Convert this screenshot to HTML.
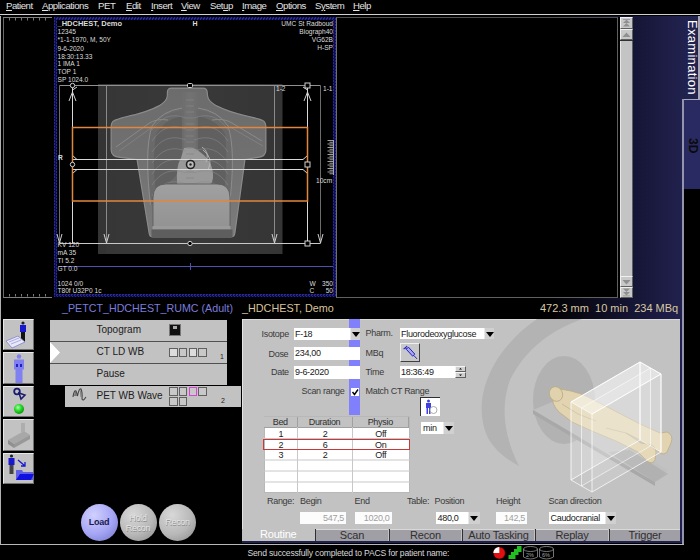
<!DOCTYPE html>
<html><head><meta charset="utf-8">
<style>
*{margin:0;padding:0;box-sizing:border-box}
html,body{width:700px;height:560px;overflow:hidden;background:#000;font-family:"Liberation Sans",sans-serif;position:relative}
.a{position:absolute}
.menu{color:#e4e4e4;font-size:9.6px;letter-spacing:-.45px;top:0.3px;white-space:nowrap}
.menu u{text-decoration:underline}
.ov{color:#dcdcdc;font-size:6.6px;line-height:7.8px;white-space:nowrap}
.ib{width:31px;background:#c2c2c2;border:1px solid;border-color:#e8e8e8 #707070 #707070 #e8e8e8}
.pr{background:#c2c2c2}
.sbb{left:620px;width:13px;height:11.5px;background:#c8c8c8;border:1px solid;border-color:#f0f0f0 #606060 #606060 #f0f0f0}
.pt{font-size:10px;color:#202020;white-space:nowrap}
.bx{width:8.5px;height:8.5px;border:1px solid #606060;background:#c8c8c8}
.rb{width:37px;height:37px;border-radius:50%}
.lb{font-size:9px;letter-spacing:-.3px;color:#3a3a3a;white-space:nowrap}
.in{background:#fff;font-size:9px;letter-spacing:-.3px;color:#202020;white-space:nowrap;padding-left:1px;line-height:12px;overflow:hidden}
.gr{color:#a0a0a0;text-align:right;padding-right:2px;background:#fcfcfc}
.dd{width:10px;background:#d0d0d0;border-left:1px solid #e8e8e8}
.dd:after{content:"";position:absolute;left:50%;top:50%;margin:-2px 0 0 -4px;border-left:4px solid transparent;border-right:4px solid transparent;border-top:5px solid #000}
.th{height:11px;font-size:9px;letter-spacing:-.3px;color:#303030;text-align:center;line-height:11px;background:#c2c2c2;border-right:1px solid #a0a0a0;border-bottom:1px solid #a0a0a0}
.td{font-size:9px;letter-spacing:-.3px;color:#202020;text-align:center;line-height:10.5px}
.tab{height:12.5px;background:#a09fa5;color:#303030;font-size:11px;text-align:center;line-height:11.5px;border-top:1px solid #d8d8d8;letter-spacing:-.2px}
</style></head><body>
<!-- menu bar -->
<div class="a menu" style="left:6px"><u>P</u>atient</div>
<div class="a menu" style="left:42px"><u>A</u>pplications</div>
<div class="a menu" style="left:98px">PET</div>
<div class="a menu" style="left:126px"><u>E</u>dit</div>
<div class="a menu" style="left:151px"><u>I</u>nsert</div>
<div class="a menu" style="left:181px"><u>V</u>iew</div>
<div class="a menu" style="left:210px">Set<u>u</u>p</div>
<div class="a menu" style="left:242px"><u>I</u>mage</div>
<div class="a menu" style="left:276px"><u>O</u>ptions</div>
<div class="a menu" style="left:315px">S<u>y</u>stem</div>
<div class="a menu" style="left:353px"><u>H</u>elp</div>
<div class="a" style="left:0;top:14px;width:700px;height:1px;background:#d0d0d0"></div>

<!-- left border line -->
<div class="a" style="left:0;top:16px;width:1px;height:529px;background:#b0b0b0"></div>

<!-- left black panel ruler -->
<div class="a" style="left:3px;top:17px;width:49px;height:281px;border-left:1px solid #6a6a6a;border-top:1px solid #808080;border-bottom:1px solid #808080"></div>
<svg class="a" style="left:0;top:15px" width="54" height="285"><g stroke="#787878" stroke-width="1"><path d="M9.5 3 V5.5 M15.5 3 V5.5 M21.5 3 V5.5 M27.5 3 V5.5 M33.5 3 V5.5 M39.5 3 V5.5 M45.5 3 V5.5"/><path d="M9.5 279 V281.5 M15.5 279 V281.5 M21.5 279 V281.5 M27.5 279 V281.5 M33.5 279 V281.5 M39.5 279 V281.5 M45.5 279 V281.5"/></g></svg>

<!-- image viewer -->
<div class="a" style="left:54px;top:17px;width:282px;height:280px;background:repeating-conic-gradient(#0c0c52 0 25%,#2a2a8c 0 50%) 0 0/3px 3px"></div>
<div class="a" style="left:57px;top:20px;width:276px;height:274px;background:#000"></div>

<svg class="a" style="left:0;top:0" width="700" height="560" viewBox="0 0 700 560">
<defs>
<linearGradient id="torso" x1="0" y1="0" x2="0" y2="1">
<stop offset="0" stop-color="#6c6c6c"/><stop offset=".45" stop-color="#707070"/><stop offset="1" stop-color="#7c7c7c"/>
</linearGradient>
<linearGradient id="xbg" x1="0" y1="0" x2="1" y2="0">
<stop offset="0" stop-color="#363636"/><stop offset=".5" stop-color="#393939"/><stop offset="1" stop-color="#353535"/>
</linearGradient>
<linearGradient id="abd" x1="0" y1="0" x2="0" y2="1">
<stop offset="0" stop-color="#a0a0a0"/><stop offset="1" stop-color="#939393"/>
</linearGradient>
<linearGradient id="spine" x1="0" y1="0" x2="1" y2="0"><stop offset="0" stop-color="#747474" stop-opacity="0"/><stop offset=".5" stop-color="#747474" stop-opacity=".8"/><stop offset="1" stop-color="#747474" stop-opacity="0"/></linearGradient>
<radialGradient id="lung" cx=".5" cy=".5" r=".5">
<stop offset="0" stop-color="#6c6c6c"/><stop offset="1" stop-color="#7a7a7a"/>
</radialGradient>
</defs>
<!-- xray background -->
<rect x="98" y="84" width="184.5" height="170" fill="url(#xbg)"/>
<rect x="98" y="84" width="8" height="170" fill="#343434"/>


<!-- torso -->
<path d="M171.5 87.5 L203 87.5 Q207.5 87.5 207.8 92 L208.2 96 C209 103 220 107 231 111 C244 115.5 259 117 264.5 121 Q266.5 123 266.5 128 L266.5 150 Q266.5 157 258 158 L245.5 160 L235.5 233 Q235 237.5 230.5 237.5 L153 237.5 Q149 237.5 148.5 233 L136.5 160 L120 158 Q110.5 157 110.5 150 L110.5 128 Q110.5 123 112.5 121 C118 117 132 115.5 145 111 C156 107 166 103 166.7 96 L166.8 92 Q167 87.5 171.5 87.5 Z" fill="url(#torso)" stroke="#2e2e2e" stroke-width=".9"/>
<clipPath id="tclip"><path d="M171.5 87.5 L203 87.5 Q207.5 87.5 207.8 92 L208.2 96 C209 103 220 107 231 111 C244 115.5 259 117 264.5 121 Q266.5 123 266.5 128 L266.5 150 Q266.5 157 258 158 L245.5 160 L235.5 233 Q235 237.5 230.5 237.5 L153 237.5 Q149 237.5 148.5 233 L136.5 160 L120 158 Q110.5 157 110.5 150 L110.5 128 Q110.5 123 112.5 121 C118 117 132 115.5 145 111 C156 107 166 103 166.7 96 L166.8 92 Q167 87.5 171.5 87.5 Z"/></clipPath>
<path d="M171.5 87.5 L203 87.5 Q207.5 87.5 207.8 92 L208.2 96 C209 103 220 107 231 111 C244 115.5 259 117 264.5 121 Q266.5 123 266.5 128 L266.5 150 Q266.5 157 258 158 L245.5 160 L235.5 233 Q235 237.5 230.5 237.5 L153 237.5 Q149 237.5 148.5 233 L136.5 160 L120 158 Q110.5 157 110.5 150 L110.5 128 Q110.5 123 112.5 121 C118 117 132 115.5 145 111 C156 107 166 103 166.7 96 L166.8 92 Q167 87.5 171.5 87.5 Z" fill="none" stroke="#8a8a8a" stroke-width="2.4" clip-path="url(#tclip)"/>
<!-- lungs -->
<path d="M151 205 Q146 160 151 130 Q160 114 184 110 L184 178 L160 200 Z" fill="#6a6a6a"/>
<path d="M229 205 Q235 160 230 130 Q221 114 196 110 L196 178 L220 200 Z" fill="#6a6a6a"/>
<path d="M156 195 Q152 160 156 134 Q164 120 182 116 L182 170 Z" fill="#555" opacity=".5"/>
<path d="M224 195 Q228 160 225 134 Q217 120 198 116 L198 170 Z" fill="#555" opacity=".5"/>
<!-- spine / mediastinum -->
<rect x="181" y="92" width="18" height="140" fill="url(#spine)"/>
<path d="M177 182 Q176 166 181 158 L184 148 Q194 146 200 152 Q214 162 213 178 Q212 188 202 188 L183 188 Q177 188 177 182 Z" fill="#999999"/>
<path d="M202 147 Q210 152 206 162 M203 150 Q214 158 208 170" stroke="#c0c0c0" stroke-width=".8" fill="none"/>
<path d="M186 118 Q165 110 152 130 M194 118 Q215 110 228 130 M186 129 Q165 121 152 141 M194 129 Q215 121 228 141 M186 140 Q165 132 152 152 M194 140 Q215 132 228 152 M186 151 Q165 143 152 163 M194 151 Q215 143 228 163 M186 162 Q165 154 152 174 M194 162 Q215 154 228 174 M186 173 Q165 165 152 185 M194 173 Q215 165 228 185 M186 184 Q165 176 152 196 M194 184 Q215 176 228 196" fill="none" stroke="#8a8a8a" stroke-width="1" opacity=".55"/>
<path d="M186 100 H194 M186 106 H194 M186 112 H194 M186 118 H194 M186 124 H194 M186 130 H194 M186 136 H194 M186 142 H194 M186 148 H194 M186 154 H194 M186 160 H194 M186 166 H194 M186 172 H194 M186 178 H194 M186 184 H194 M186 190 H194 M186 196 H194 M186 202 H194 M186 208 H194 M186 214 H194 M186 220 H194 M186 226 H194" stroke="#858585" stroke-width="1.5" opacity=".5"/>
<!-- ribcage outline -->
<path d="M150.5 205 Q144 150 152 126 Q162 111 182 108" fill="none" stroke="#8c8c8c" stroke-width="1"/>
<path d="M229.5 205 Q236 150 228 126 Q218 111 198 108" fill="none" stroke="#8c8c8c" stroke-width="1"/>
<!-- clavicles / arms -->
<path d="M116 147 L148 124 Q156 118 168 120 M262 141 L232 123 Q224 118 212 120" stroke="#8a8a8a" stroke-width="1" fill="none"/>
<path d="M119 151 L151 128 M263 146 L230 127" stroke="#808080" stroke-width="1" fill="none"/>
<!-- abdomen block -->
<path d="M153 227 L153 198 Q153 184 166 184 L217 184 Q230 184 230 198 L230 227 Z" fill="url(#abd)" stroke="#585858" stroke-width=".8"/>
<rect x="152.5" y="226" width="78" height="3.5" fill="#9a9a9a"/>
<rect x="151.5" y="229.5" width="81" height="7.5" fill="#5e5e5e"/>
<!-- overlay frame lines -->
<g fill="none" stroke-width="1">
<path d="M59.5 85.5 L320.5 85.5" stroke="#909090"/><path d="M59.5 243.5 L59.5 85.5 M320.5 85.5 L320.5 243.5" stroke="#6c6c6c"/>
<path d="M106.5 85.5 V243.5 M274.5 85.5 V243.5" stroke="#8a8a8a"/>
<path d="M59.5 243.5 H320.5" stroke="#c8c8c8"/>
<path d="M72.5 85.5 V243.5 M307.5 85.5 V243.5" stroke="#d8d8d8"/>
<path d="M73 159.5 H303 M73 169.5 H303 M303 159.5 L307.5 155.5 M303 169.5 L307.5 173.5 M77 159.5 L72.5 155.5 M77 169.5 L72.5 173.5" stroke="#d8d8d8"/>
</g>
<g fill="none" stroke="#e0883c" stroke-width="1.5">
<path d="M72.5 127.5 H307.5 V201 H72.5 Z"/>
</g>
<!-- markers -->
<g fill="#000" stroke="#d0d0d0" stroke-width="1">
<circle cx="72.5" cy="85.5" r="2.2"/>
<circle cx="72.5" cy="164.5" r="2.2"/>
<rect x="305" y="83" width="5" height="5"/>
<rect x="305" y="162" width="5" height="5"/>
<rect x="305" y="241" width="5" height="5"/>
<rect x="187.5" y="83.5" width="5" height="4" rx="1"/>
<circle cx="190" cy="243.5" r="2.2"/>
<circle cx="190.5" cy="164.5" r="4" stroke="#222" stroke-width="1.6" fill="#bbb"/>
<circle cx="190.5" cy="164.5" r="1.2" fill="#222" stroke="none"/>
</g>
<g fill="none" stroke="#d0d0d0" stroke-width="1">
<path d="M72.5 92 L69 101 M72.5 92 L76 101 M72.5 90 L77 87"/>
<path d="M307.5 92 L304 101 M307.5 92 L311 101 M307.5 90 L303 87"/>
<path d="M57 234 L59.5 243 L62 234 M104 234 L106.5 243 L109 234 M272 234 L274.5 243 L277 234 M318 234 L320.5 243 L323 234"/>
</g>
<!-- scale ruler -->
<g stroke="#c8c8c8" stroke-width=".8"><path d="M333.5 140 V175"/><path d="M327.5 140.50 H333 M329.5 142.25 H333 M327.5 144.00 H333 M329.5 145.75 H333 M327.5 147.50 H333 M329.5 149.25 H333 M327.5 151.00 H333 M329.5 152.75 H333 M327.5 154.50 H333 M329.5 156.25 H333 M327.5 158.00 H333 M329.5 159.75 H333 M327.5 161.50 H333 M329.5 163.25 H333 M327.5 165.00 H333 M329.5 166.75 H333 M327.5 168.50 H333 M329.5 170.25 H333 M327.5 172.00 H333 M329.5 173.75 H333"/></g>
<!-- blue line -->
<path d="M58 266.5 H333" stroke="#5050b0" stroke-width="1.2"/>
<path d="M190.5 263 V270" stroke="#5050b0" stroke-width="1"/>
</svg>
<!-- viewer text overlays -->
<div class="a ov" style="left:57.5px;top:20.2px;font-weight:bold;font-size:7.5px">_HDCHEST, Demo</div>
<div class="a ov" style="left:57.5px;top:28.2px">12345</div>
<div class="a ov" style="left:57.5px;top:36.2px">*1-1-1970, M, 50Y</div>
<div class="a ov" style="left:57.5px;top:44.7px">9-6-2020</div>
<div class="a ov" style="left:57.5px;top:52.5px">18:30:13.33</div>
<div class="a ov" style="left:57.5px;top:60.2px">1 IMA 1</div>
<div class="a ov" style="left:57.5px;top:68.0px">TOP 1</div>
<div class="a ov" style="left:57.5px;top:75.7px">SP 1024.0</div>
<div class="a ov" style="left:192.5px;top:20.2px;font-weight:bold;font-size:7px">H</div>
<div class="a ov" style="right:367px;top:20.2px;text-align:right">UMC St Radboud<br>Biograph40<br>VG62B<br>H-SP</div>
<div class="a ov" style="left:58px;top:153.5px;font-weight:bold">R</div>
<div class="a ov" style="left:316px;top:176.5px">10cm</div>
<div class="a ov" style="left:276px;top:84.5px">1-2</div>
<div class="a ov" style="left:323px;top:84.5px">1-1</div>
<div class="a ov" style="left:57.5px;top:241.3px;line-height:7.85px">KV 120<br>mA 35<br>TI 5.2<br>GT 0.0</div>
<div class="a ov" style="left:57.5px;top:279.7px;line-height:7.4px">1024 0/0<br>T80f U32P0 1c</div>
<div class="a ov" style="left:309.5px;top:281px;line-height:6.8px">W<br>C</div>
<div class="a ov" style="right:367px;top:281px;line-height:6.8px;text-align:right">350<br>50</div>
<div class="a" style="left:1px;top:1px"></div>
<div class="a" style="left:340px;top:16px;width:358px;height:303px;background:linear-gradient(90deg,#000 0px,#000 205px,#151535 293px,#21214e 342px,#232350 358px)"></div>
<div class="a" style="left:336px;top:17px;width:284px;height:281px;background:#000"></div>
<!-- right black panel -->
<div class="a" style="left:336px;top:17px;width:282px;height:281px;border-top:1px solid #505050;border-left:1px solid #707070;border-right:1px solid #606060;border-bottom:1px solid #606060"></div>

<!-- scrollbar -->
<div class="a" style="left:620px;top:17px;width:13px;height:281px;background:#c4c4c4;border-left:1px solid #e8e8e8;border-right:1px solid #606060"></div>
<div class="a sbb" style="top:17px"></div><div class="a sbb" style="top:28.5px"></div>
<div class="a sbb" style="top:275.5px"></div><div class="a sbb" style="top:286.5px"></div>
<div class="a" style="left:620px;top:40px;width:13px;height:1px;background:#303030"></div>
<svg class="a" style="left:620px;top:17px" width="13" height="281">
<g fill="#909090"><path d="M3 6 L6.5 2.5 L10 6 Z M3 9.5 L6.5 6 L10 9.5 Z"/><rect x="3" y="2" width="7" height=".8"/>
<path d="M2.5 20 L6.5 15.5 L10.5 20 Z"/>
<path d="M2.5 263 L6.5 267.5 L10.5 263 Z"/>
<path d="M3 271.5 L6.5 275 L10 271.5 Z M3 275 L6.5 278.5 L10 275 Z"/><rect x="3" y="278.5" width="7" height=".8"/></g>
</svg>


<!-- navy panel -->
<div class="a" style="left:698px;top:16px;width:1.5px;height:84px;background:#a8a8b8"></div>
<div class="a" style="left:682px;top:99px;width:18px;height:1.5px;background:#a8a8b8"></div>
<div class="a" style="left:683px;top:100px;width:17px;height:89px;background:#2a2a62"></div>
<div class="a" style="left:684px;top:189px;width:16px;height:371px;background:#000"></div>
<div class="a" style="left:682px;top:99px;width:2px;height:446px;background:#9494ac"></div>
<div class="a" style="left:685px;top:17px;width:14px;height:82px;">
<div style="position:absolute;left:14px;top:3px;transform-origin:0 0;transform:rotate(90deg);font-size:13px;color:#fff;white-space:nowrap;letter-spacing:.3px;line-height:14px">Examination</div></div>
<div class="a" style="left:685px;top:100px;width:15px;height:89px;">
<div style="position:absolute;left:14px;top:37.5px;transform-origin:0 0;transform:rotate(90deg);font-size:12px;font-weight:bold;color:#0a0a0a;white-space:nowrap;line-height:13px">3D</div></div>

<!-- status row -->
<div class="a" style="left:62px;top:302.3px;font-size:10.7px;color:#7c7cdc;white-space:nowrap">_PETCT_HDCHEST_RUMC (Adult)</div>
<div class="a" style="left:242px;top:302.3px;font-size:10.8px;color:#d8c49c;white-space:nowrap">_HDCHEST, Demo</div>
<div class="a" style="left:540px;top:302px;font-size:11px;color:#d8c8a0;white-space:nowrap">472.3 mm&nbsp;&nbsp;10 min&nbsp;&nbsp;234 MBq</div>

<!-- main grey panel -->
<div class="a" style="left:242px;top:319px;width:438px;height:222px;background:#c2c2c2;border-left:1px solid #e4e4e4;border-top:1px solid #d8d8d8"></div>
<div class="a" style="left:242px;top:541px;width:440px;height:2px;background:#202050"></div>
<div class="a" style="left:680px;top:319px;width:2px;height:224px;background:#202050"></div>

<!-- ===== LOWER SECTION ===== -->
<!-- left icons -->
<div class="a ib" style="left:3px;top:319px;height:31px"></div>
<div class="a ib" style="left:3px;top:352px;height:32px"></div>
<div class="a ib" style="left:3px;top:386px;height:31px"></div>
<div class="a ib" style="left:3px;top:419px;height:32px"></div>
<div class="a ib" style="left:3px;top:453px;height:31px"></div>
<svg class="a" style="left:0;top:315px" width="40" height="175" viewBox="0 315 40 175">
<!-- icon1 person + table -->
<circle cx="23" cy="323" r="1.6" fill="#222"/>
<rect x="20" y="325" width="6" height="7" fill="#1818d0"/>
<rect x="21" y="332" width="4" height="10" fill="#111"/>
<path d="M6 341 L18 336 L25 342 L12 348 Z" fill="#e8e8f8" stroke="#8080d0" stroke-width=".8"/>
<path d="M9 342 L19 338 M11 344 L21 340" stroke="#8080d0" stroke-width=".6"/>
<!-- icon2 light person -->
<circle cx="19" cy="356.5" r="2.2" fill="#8080f0"/>
<rect x="14" y="359.5" width="10" height="10" fill="#8080f0"/>
<rect x="15.5" y="369" width="7" height="14" fill="#8080f0"/>
<rect x="16" y="364" width="2" height="3" fill="#2020c0"/><rect x="20" y="364" width="2" height="3" fill="#2020c0"/>
<!-- icon3 key + green ball -->
<circle cx="17" cy="391.5" r="2.8" fill="none" stroke="#1a1a70" stroke-width="1.8"/>
<path d="M19 393 L25 395 L21 399 Z" fill="none" stroke="#1a1a70" stroke-width="1.5"/>
<defs><radialGradient id="gb" cx=".4" cy=".35" r=".6"><stop offset="0" stop-color="#b0ffb0"/><stop offset=".5" stop-color="#30e030"/><stop offset="1" stop-color="#10a010"/></radialGradient>
<radialGradient id="loadg" cx=".35" cy=".3" r=".75"><stop offset="0" stop-color="#c8c8ff"/><stop offset=".6" stop-color="#a0a0f4"/><stop offset="1" stop-color="#7c7cd8"/></radialGradient>
<radialGradient id="greyg" cx=".35" cy=".3" r=".75"><stop offset="0" stop-color="#d0d0d0"/><stop offset=".6" stop-color="#b4b4b4"/><stop offset="1" stop-color="#8c8c8c"/></radialGradient>
</defs>
<circle cx="19" cy="409" r="5" fill="url(#gb)"/>
<!-- icon4 table grey -->
<path d="M8 440 L24 431 L30 435 L14 444 Z" fill="#a8a8a8"/>
<path d="M8 440 L14 444 L14 448 L8 444 Z" fill="#909090"/>
<path d="M14 444 L30 435 L30 439 L14 448 Z" fill="#989898"/>
<path d="M22 423 L22 432 M24 423 L24 431" stroke="#a0a0a0" stroke-width="1.2"/>
<!-- icon5 person arrow folder -->
<circle cx="11.5" cy="456" r="1.6" fill="#222"/>
<rect x="8.5" y="458" width="6" height="7" fill="#1818d0"/>
<rect x="9.5" y="465" width="4" height="9" fill="#444"/>
<path d="M18 460 L25 466 M25 462 L25 466 L21 466" stroke="#1818d0" stroke-width="1.3" fill="none"/>
<path d="M16 470 L22 470 L23 472 L33 472 L33 480 L16 480 Z" fill="#6060e0"/>
<path d="M16 480 L20 474 L34 474 L31 480 Z" fill="#1010e0"/>
</svg>

<!-- protocol list -->
<div class="a pr" style="left:50px;top:320px;width:177px;height:21px"></div>
<div class="a pr" style="left:50px;top:342px;width:177px;height:21px"></div>
<div class="a pr" style="left:50px;top:364px;width:177px;height:21px"></div>
<div class="a pr" style="left:65px;top:386px;width:176px;height:21px"></div>
<div class="a" style="left:50px;top:341px;width:177px;height:1px;background:#505050"></div>
<div class="a" style="left:50px;top:363px;width:177px;height:1px;background:#505050"></div>
<svg class="a" style="left:50px;top:342px" width="11" height="21"><path d="M0 0 L10 10.5 L0 21 Z" fill="#fff"/></svg>
<div class="a pt" style="left:96.5px;top:324px">Topogram</div>
<div class="a pt" style="left:96.5px;top:346px">CT LD WB</div>
<div class="a pt" style="left:96.5px;top:368px">Pause</div>
<div class="a pt" style="left:96.5px;top:389.5px">PET WB Wave</div>
<svg class="a" style="left:72px;top:387px" width="16" height="14"><path d="M1 10 Q2 3 4 4 Q5 7 5.5 9 Q7 1 9 2 Q10.5 5 10 12 Q11 14 12.5 12 L14 10" fill="none" stroke="#444" stroke-width="1.1"/><path d="M2 9 Q3 4 4 5 L5 9 Z M8 3 Q9.5 4 9.5 10 L8.5 10 Z" fill="#777"/></svg>
<div class="a" style="left:169px;top:324px;width:12px;height:12px;background:#111;border:1px solid #777"></div>
<div class="a" style="left:173px;top:326px;width:4px;height:3px;background:#aaa"></div>
<div class="a bx" style="left:169px;top:348px;background:#dcdcdc"></div><div class="a bx" style="left:178.5px;top:348px"></div><div class="a bx" style="left:188.5px;top:348px;background:#dcdcdc"></div><div class="a bx" style="left:198px;top:348px"></div>
<div class="a" style="left:220px;top:353px;font-size:7px;color:#222">1</div>
<div class="a bx" style="left:169px;top:387px"></div><div class="a bx" style="left:178.5px;top:387px"></div><div class="a bx" style="left:188.5px;top:387px;border-color:#e040e0;border-width:1.5px"></div><div class="a bx" style="left:198px;top:387px"></div>
<div class="a bx" style="left:169px;top:397px"></div><div class="a bx" style="left:178.5px;top:397px"></div>
<div class="a" style="left:221px;top:397px;font-size:7px;color:#222">2</div>

<!-- buttons -->
<div class="a rb" style="left:80.5px;top:504px;background:radial-gradient(circle at 35% 30%,#d0d0ff 0%,#a4a4f4 55%,#7070c8 100%)"></div>
<div class="a rb" style="left:119.5px;top:504px;background:radial-gradient(circle at 35% 30%,#d8d8d8 0%,#b8b8b8 55%,#888 100%)"></div>
<div class="a rb" style="left:159px;top:504px;background:radial-gradient(circle at 35% 30%,#d8d8d8 0%,#b8b8b8 55%,#888 100%)"></div>
<div class="a" style="left:80.5px;top:517px;width:37px;text-align:center;font-size:9px;font-weight:bold;color:#1a1a50;letter-spacing:-.3px">Load</div>
<div class="a" style="left:119.5px;top:514px;width:37px;text-align:center;font-size:9px;line-height:9.5px;color:#e4e4e4;letter-spacing:-.3px;text-shadow:.5px .5px 0 #8a8a8a">Hold<br>Recon</div>
<div class="a" style="left:159px;top:517px;width:37px;text-align:center;font-size:9px;color:#e4e4e4;letter-spacing:-.3px;text-shadow:.5px .5px 0 #8a8a8a">Recon</div>

<!-- grey panel content -->
<svg class="a" style="left:242px;top:319px" width="438" height="210" viewBox="242 319 438 210">
<defs><clipPath id="pc"><rect x="242" y="319" width="438" height="210"/></clipPath></defs>
<g clip-path="url(#pc)">
<path d="M537 319 C498 345 468 395 488 438 C496 452 508 460 519 466 C506 440 499 410 510 380 C526 348 552 330 582 319 Z" fill="#b3b3b3"/>
<ellipse cx="564" cy="400" rx="31" ry="44" fill="#b2b2b2"/>
<!-- table -->
<path d="M533 410 L552 402 L668 470 L655 482 Z" fill="#bfbfbf"/>
<path d="M533 410 L655 482 L655 486 L533 414 Z" fill="#a8a8a8"/>
<path d="M608 452 L655 482 L668 474 L630 450 Z" fill="#a8a8a8" opacity=".6"/>
<!-- patient -->
<path d="M560 389 L571 391 Q580 393 588 397 L613 410 L640 424 L660 433 L667 432 Q674 435 671 443 L667 452 Q663 456 659 452 L652 447 L638 439 L626 433 L641 443 L648 444 Q656 446 656 452 L655 460 Q652 465 647 461 L638 452 L616 441 L592 431 L572 422 L559 412 Q551 404 553 396 Z" fill="#e2d4b0" stroke="#bcac84" stroke-width=".8"/>
<path d="M562 404 L578 414 L596 421 M606 428 L626 433" fill="none" stroke="#c4b48c" stroke-width=".8"/>
<ellipse cx="556" cy="394" rx="6.5" ry="7.5" fill="#e0d2ac" stroke="#bcac84" stroke-width=".8" transform="rotate(-25 556 394)"/>
<!-- glass slabs -->
<path d="M571 402 L640 362 L640 440 L571 480 Z" fill="rgba(255,255,255,.2)" stroke="rgba(255,255,255,.8)" stroke-width="1"/>
<path d="M640 362 L661 374 L661 452 L640 440 Z" fill="rgba(255,255,255,.22)" stroke="rgba(255,255,255,.7)" stroke-width="1"/>
<path d="M571 402 L640 362 L661 374 L592 414 Z" fill="rgba(255,255,255,.4)" stroke="rgba(255,255,255,.7)" stroke-width="1"/>
<path d="M581.5 408 L650.5 368 L650.5 446 L581.5 486 Z" fill="rgba(255,255,255,.1)" stroke="rgba(255,255,255,.6)" stroke-width="1"/>
<path d="M592 414 L661 374 L661 452 L592 492 Z" fill="rgba(255,255,255,.12)" stroke="rgba(255,255,255,.75)" stroke-width="1"/>
<path d="M571 480 L592 492" stroke="rgba(255,255,255,.7)" stroke-width="1"/>
</g>
</svg>
<!-- blue band -->
<div class="a" style="left:349px;top:319px;width:11px;height:96px;background:#8080fc"></div>

<div class="a lb" style="left:261.5px;top:328.5px">Isotope</div>
<div class="a lb" style="left:268.5px;top:348.5px">Dose</div>
<div class="a lb" style="left:271px;top:366.5px">Date</div>
<div class="a lb" style="left:301.5px;top:385.5px">Scan range</div>
<div class="a in" style="left:294px;top:328px;width:56px;height:12px">F-18</div>
<div class="a dd" style="left:350px;top:328px;height:11.5px"></div>
<div class="a in" style="left:294px;top:346.5px;width:66px;height:13px">234,00</div>
<div class="a in" style="left:294px;top:365.5px;width:66px;height:13px">9-6-2020</div>
<div class="a" style="left:351px;top:388px;width:8px;height:8px;background:#fff"></div>
<svg class="a" style="left:351px;top:388px" width="8" height="8"><path d="M1.5 4 L3.5 6.5 L7 1.5" fill="none" stroke="#000" stroke-width="1.4"/></svg>

<div class="a lb" style="left:365.5px;top:328px">Pharm.</div>
<div class="a lb" style="left:365.5px;top:347.5px">MBq</div>
<div class="a lb" style="left:365.5px;top:366.5px">Time</div>
<div class="a lb" style="left:365.5px;top:386px">Match CT Range</div>
<div class="a in" style="left:400px;top:328.3px;width:85px;height:11px">Fluorodeoxyglucose</div>
<div class="a dd" style="left:484px;top:328.3px;height:11px"></div>
<div class="a" style="left:400px;top:343px;width:20px;height:19px;background:#c8c8c8;border:1px solid;border-color:#f0f0f0 #404040 #404040 #f0f0f0"></div>
<svg class="a" style="left:400px;top:343px" width="20" height="19"><path d="M3.6 6.2 L7.2 3.2 M5.4 4.7 L6.6 6" stroke="#2020d0" stroke-width="1.1" fill="none"/><path d="M6.3 6.3 L8.4 4.1 L14.8 11.1 L12.7 13.2 Z" stroke="#2020d0" stroke-width="1" fill="#a8a8e8"/><path d="M13.8 12.4 L17 15.9" stroke="#2020d0" stroke-width="1" fill="none"/></svg>
<div class="a in" style="left:400px;top:365.7px;width:55px;height:12px">18:36:49</div>
<div class="a" style="left:455px;top:365.5px;width:11px;height:6px;background:#d0d0d0;border:1px solid;border-color:#f4f4f4 #606060 #606060 #f4f4f4"></div>
<div class="a" style="left:455px;top:371.5px;width:11px;height:6px;background:#d0d0d0;border:1px solid;border-color:#f4f4f4 #606060 #606060 #f4f4f4"></div>
<svg class="a" style="left:455px;top:365.5px" width="11" height="12"><path d="M4 3.5 L5.5 2 L7 3.5 Z M4 8.5 L5.5 10 L7 8.5 Z" fill="#000"/></svg>
<div class="a" style="left:420px;top:397px;width:19.5px;height:19px;background:#fff;border-left:1px solid #303030;border-top:1px solid #303030"></div>
<svg class="a" style="left:420px;top:397px" width="20" height="19"><circle cx="8.5" cy="4" r="1.5" fill="#4040e0"/><rect x="6" y="6" width="5" height="5" fill="#4040e0"/><rect x="6.5" y="11" width="1.5" height="6" fill="#4040e0"/><rect x="9" y="11" width="1.5" height="6" fill="#4040e0"/><circle cx="13.5" cy="13" r="3.5" fill="#fff" stroke="#999" stroke-width=".8"/></svg>
<div class="a in" style="left:421px;top:421.7px;width:33px;height:12px;padding-left:2px">min</div>
<div class="a dd" style="left:443px;top:421.7px;height:12px;width:11px"></div>

<!-- table -->
<div class="a" style="left:263.5px;top:416px;width:146px;height:77px;background:#fff;border:1px solid #b8b8b8"></div>
<div class="a th" style="left:264px;top:416.5px;width:33.5px">Bed</div>
<div class="a th" style="left:297.5px;top:416.5px;width:55px">Duration</div>
<div class="a th" style="left:352.5px;top:416.5px;width:56.5px">Physio</div>
<svg class="a" style="left:263px;top:416px" width="148" height="78">
<g stroke="#c8c8c8" stroke-width="1">
<path d="M0 22.5 H147 M0 33.5 H147 M0 44 H147 M0 55 H147 M0 66 H147"/>
<path d="M34.5 11 V77 M89.5 11 V77"/>
</g>
</svg>
<div class="a td" style="left:264px;top:429px;width:33.5px">1<br>2<br>3</div>
<div class="a td" style="left:297.5px;top:429px;width:55px">2<br>6<br>2</div>
<div class="a td" style="left:352.5px;top:429px;width:56.5px">Off<br>On<br>Off</div>
<div class="a" style="left:263px;top:438.5px;width:147px;height:11px;border:1.3px solid #c83a3a"></div>

<!-- range row -->
<div class="a lb" style="left:267px;top:496px">Range:</div>
<div class="a lb" style="left:300px;top:496px">Begin</div>
<div class="a lb" style="left:354.5px;top:496px">End</div>
<div class="a lb" style="left:407px;top:496px">Table:</div>
<div class="a lb" style="left:434.5px;top:496px">Position</div>
<div class="a lb" style="left:496px;top:496px">Height</div>
<div class="a lb" style="left:548.5px;top:496px">Scan direction</div>
<div class="a in gr" style="left:299.5px;top:512px;width:46.5px;height:12px">547,5</div>
<div class="a in gr" style="left:355px;top:512px;width:36.5px;height:12px">1020,0</div>
<div class="a in" style="left:435.5px;top:511.5px;width:44px;height:12.5px;padding-left:2px">480,0</div>
<div class="a dd" style="left:467.5px;top:511.5px;height:12.5px;width:12px"></div>
<div class="a in gr" style="left:496px;top:511.5px;width:31px;height:12.5px">142,5</div>
<div class="a in" style="left:548.5px;top:511.5px;width:67.5px;height:12.5px;padding-left:2px">Caudocranial</div>
<div class="a dd" style="left:604.5px;top:511.5px;height:12.5px;width:11.5px"></div>

<!-- tabs -->
<div class="a tab" style="left:242px;top:528.5px;width:72.5px;background:#c2c2c2;color:#fff;border-top:none">Routine</div>
<div class="a tab" style="left:316px;top:528.5px;width:72px">Scan</div>
<div class="a tab" style="left:390px;top:528.5px;width:71px">Recon</div>
<div class="a tab" style="left:463px;top:528.5px;width:71px">Auto Tasking</div>
<div class="a tab" style="left:536px;top:528.5px;width:72px">Replay</div>
<div class="a tab" style="left:610px;top:528.5px;width:70px">Trigger</div>
<div class="a" style="left:314.5px;top:528.5px;width:1.5px;height:12.5px;background:#303030"></div>
<div class="a" style="left:388.5px;top:528.5px;width:1.5px;height:12.5px;background:#303030"></div>
<div class="a" style="left:461.5px;top:528.5px;width:1.5px;height:12.5px;background:#303030"></div>
<div class="a" style="left:534.5px;top:528.5px;width:1.5px;height:12.5px;background:#303030"></div>
<div class="a" style="left:608.5px;top:528.5px;width:1.5px;height:12.5px;background:#303030"></div>

<!-- status icons -->
<svg class="a" style="left:490px;top:545px" width="70" height="15">
<circle cx="9.3" cy="8" r="6" fill="#e01010" stroke="#300" stroke-width=".6"/>
<path d="M9.3 8 V2 A6 6 0 0 0 3.3 8 Z" fill="#fff"/>
<path d="M18.5 14 V10 H21 V7 H24 V4 H27 V1 H31.5 V7 H28.5 V10 H25.5 V14 Z" fill="#20c020"/>
<g fill="none" stroke="#909090" stroke-width=".8"><ellipse cx="40.5" cy="4" rx="7" ry="2.5"/><path d="M33.5 4 V12 Q40.5 16 47.5 12 V4"/><ellipse cx="56.5" cy="4" rx="7" ry="2.5"/><path d="M49.5 4 V12 Q56.5 16 63.5 12 V4"/></g>
<text x="36" y="12" font-size="5.5" fill="#a0a0a0" font-family="Liberation Sans">2%</text>
<text x="52" y="12" font-size="5.5" fill="#a0a0a0" font-family="Liberation Sans">6%</text>
</svg>

<!-- status line -->
<div class="a" style="left:247.5px;top:547.5px;font-size:8.6px;letter-spacing:-.2px;color:#d8d8d8;white-space:nowrap">Send successfully completed to PACS for patient name:</div>
<div class="a" style="left:0;top:544px;width:684px;height:1px;background:#b8b8b8"></div>
</body></html>
